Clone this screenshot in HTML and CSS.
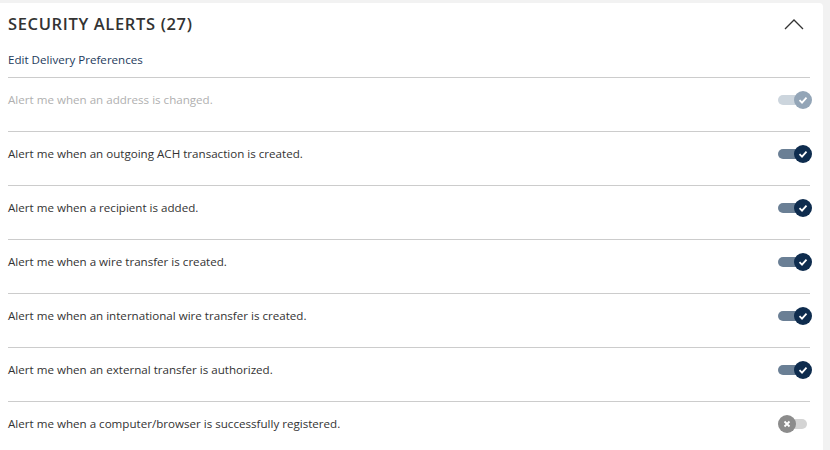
FILE: index.html
```html
<!DOCTYPE html>
<html>
<head>
<meta charset="utf-8">
<link rel="stylesheet" href="styles.css">
</head>
<body>
<div class="card">
  <div class="header">
    <h2 class="title">SECURITY ALERTS (27)</h2>
    <svg class="chevron" width="20" height="12" viewBox="0 0 20 12"><path d="M1 11 L10 2 L19 11" fill="none" stroke="#333" stroke-width="1.3"/></svg>
  </div>
  <a class="edit-link" href="#">Edit Delivery Preferences</a>
  <ul class="alerts">
    <li class="alert disabled">
      <span class="label">Alert me when an address is changed.</span>
      <span class="toggle on dim"><span class="knob"><svg width="10" height="10" viewBox="0 0 10 10"><path d="M1.5 5.2 L4 7.6 L8.5 2.6" fill="none" stroke="#fff" stroke-width="1.8"/></svg></span></span>
    </li>
    <li class="alert">
      <span class="label">Alert me when an outgoing ACH transaction is created.</span>
      <span class="toggle on"><span class="knob"><svg width="10" height="10" viewBox="0 0 10 10"><path d="M1.5 5.2 L4 7.6 L8.5 2.6" fill="none" stroke="#fff" stroke-width="1.8"/></svg></span></span>
    </li>
    <li class="alert">
      <span class="label">Alert me when a recipient is added.</span>
      <span class="toggle on"><span class="knob"><svg width="10" height="10" viewBox="0 0 10 10"><path d="M1.5 5.2 L4 7.6 L8.5 2.6" fill="none" stroke="#fff" stroke-width="1.8"/></svg></span></span>
    </li>
    <li class="alert">
      <span class="label">Alert me when a wire transfer is created.</span>
      <span class="toggle on"><span class="knob"><svg width="10" height="10" viewBox="0 0 10 10"><path d="M1.5 5.2 L4 7.6 L8.5 2.6" fill="none" stroke="#fff" stroke-width="1.8"/></svg></span></span>
    </li>
    <li class="alert">
      <span class="label">Alert me when an international wire transfer is created.</span>
      <span class="toggle on"><span class="knob"><svg width="10" height="10" viewBox="0 0 10 10"><path d="M1.5 5.2 L4 7.6 L8.5 2.6" fill="none" stroke="#fff" stroke-width="1.8"/></svg></span></span>
    </li>
    <li class="alert">
      <span class="label">Alert me when an external transfer is authorized.</span>
      <span class="toggle on"><span class="knob"><svg width="10" height="10" viewBox="0 0 10 10"><path d="M1.5 5.2 L4 7.6 L8.5 2.6" fill="none" stroke="#fff" stroke-width="1.8"/></svg></span></span>
    </li>
    <li class="alert">
      <span class="label">Alert me when a computer/browser is successfully registered.</span>
      <span class="toggle off"><span class="knob"><svg width="10" height="10" viewBox="0 0 10 10"><path d="M2.5 2.5 L7.5 7.5 M7.5 2.5 L2.5 7.5" fill="none" stroke="#fff" stroke-width="1.8"/></svg></span></span>
    </li>
  </ul>
</div>
</body>
</html>
```

FILE: styles.css
```css
html, body {
  margin: 0;
  padding: 0;
}
body {
  background: #f2f2f2;
  font-family: "Open Sans", "Liberation Sans", sans-serif;
  color: #333;
  width: 830px;
  height: 450px;
  overflow: hidden;
}
.card {
  background: #fff;
  margin-top: 3px;
  width: 823px;
  border-radius: 0 4px 0 0;
  padding: 0 13px 0 8px;
  box-sizing: border-box;
  min-height: 447px;
}
.header {
  display: flex;
  align-items: center;
  justify-content: space-between;
  height: 42px;
}
.title {
  margin: 0;
  font-size: 16.5px;
  font-weight: 600;
  letter-spacing: 0.65px;
  color: #333;
  line-height: 42px;
}
.chevron {
  margin-right: 6px;
}
.edit-link {
  display: block;
  font-size: 11.6px;
  color: #1d3b5c;
  text-decoration: none;
  line-height: 16px;
  padding: 7px 0 9px;
}
.alerts {
  list-style: none;
  margin: 0;
  padding: 0;
}
.alert {
  display: flex;
  justify-content: space-between;
  align-items: flex-start;
  border-top: 1px solid #cccccc;
  padding-top: 14px;
  height: 39px;
}
.label {
  font-size: 11.6px;
  line-height: 16px;
  color: #333;
}
.disabled .label {
  color: #b0b0b0;
}
.toggle {
  position: relative;
  width: 34px;
  height: 18px;
  margin-right: -2px;
  margin-top: -1px;
}
.toggle::before {
  content: "";
  position: absolute;
  left: 0;
  top: 4px;
  width: 30px;
  height: 10px;
  border-radius: 5px;
  background: #6a7f95;
}
.knob {
  position: absolute;
  top: 0;
  width: 18px;
  height: 18px;
  border-radius: 50%;
  background: #0e2c4e;
  display: flex;
  align-items: center;
  justify-content: center;
}
.on .knob {
  right: 0;
}
.dim::before {
  background: #ccd5dd;
}
.dim .knob {
  background: #93a5b7;
}
.off::before {
  left: 2px;
  width: 27px;
  background: #d4d4d4;
}
.off .knob {
  left: 0;
  background: #8c8c8c;
}
```
